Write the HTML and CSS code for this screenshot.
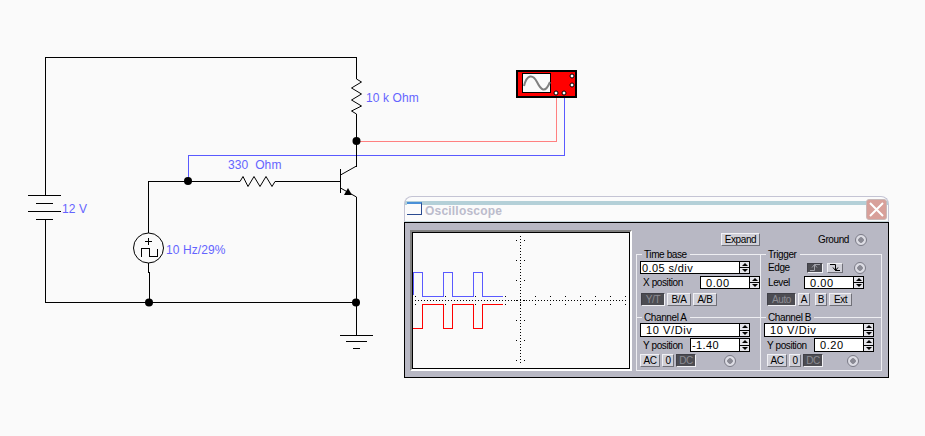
FILE: index.html
```html
<!doctype html>
<html>
  <head>
    <meta charset="utf-8">
    <title>Oscilloscope</title>
    <link rel="stylesheet" href="styles.css">
  </head>
  <body>
    <div class="desk">
      <svg class="circuit" width="925" height="436" viewBox="0 0 925 436">
        <!-- scope leads -->
        <path class="lead-a" d="M556.5 97V141.5H356.5"/>
        <path class="lead-b" d="M564.5 97V155.5H188.5V181.5"/>

        <!-- wires -->
        <path class="wire" d="M45.5 195V57.5H356.5V79"/>
        <path class="wire" d="M45.5 220V302.5H356.5"/>
        <path class="wire" d="M148.5 233V181.5H240"/>
        <path class="wire" d="M275 181.5H340.5"/>
        <path class="wire" d="M356.5 114V167"/>
        <path class="wire" d="M356.5 197V335"/>
        <path class="wire" d="M148.5 263V272H149.5V302"/>

        <!-- resistors -->
        <path class="part" d="M356.5 79L361.5 82L351.5 88L361.5 94L351.5 100L361.5 106L351.5 111L356.5 114"/>
        <path class="part" d="M240 181.5L243 176.5L248 186.5L254 176.5L260 186.5L266 176.5L272 186.5L275 181.5"/>

        <!-- battery -->
        <path class="wire" d="M28 195.5H61M36 203.5H53M28 211.5H61M36 219.5H53"/>

        <!-- square wave source -->
        <circle class="part" cx="148.5" cy="248" r="15"/>
        <path class="wire" d="M145 241.5H152M148.5 238V245M141 256.5V248.5H149.5V256.5H157V249"/>

        <!-- transistor -->
        <path class="wire" d="M340.5 169V193"/>
        <path class="part" d="M340.5 175L356.5 166M340.5 188L356.5 197"/>
        <path class="fill" d="M348 188L344 195L352 195Z"/>

        <!-- ground -->
        <path class="wire" d="M340 335.5H373M346 341.5H367M353 348.5H360"/>

        <!-- junctions -->
        <circle class="fill" cx="356.5" cy="141" r="4"/>
        <circle class="fill" cx="188" cy="181" r="4"/>
        <circle class="fill" cx="149" cy="302.5" r="4"/>
        <circle class="fill" cx="356" cy="302.5" r="4"/>

        <text class="label" x="366" y="102">10 k Ohm</text>
        <text class="label" x="228" y="169">330&#160; Ohm</text>
        <text class="label" x="62" y="213">12 V</text>
        <text class="label" x="166" y="254">10 Hz/29%</text>

        <!-- scope icon -->
        <rect class="scope-body" x="517" y="71" width="59" height="26"/>
        <rect class="scope-face" x="522.5" y="73.5" width="28" height="19"/>
        <path class="scope-sine" d="M524 86C527 74 533 74 537 82S545 94 550 82"/>
        <circle class="scope-pin" cx="556" cy="93" r="2"/>
        <circle class="scope-pin" cx="564" cy="93" r="2"/>
        <circle class="scope-pin" cx="572" cy="85" r="2"/>
        <circle class="scope-pin" cx="572" cy="76" r="2"/>
      </svg>

      <div class="window">
        <div class="titlebar">
          <span class="win-icon"></span>
          <span class="win-title">Oscilloscope</span>
          <span class="win-close">
            <svg width="21" height="21" viewBox="0 0 21 21"><path d="M4 4L17 17M17 4L4 17"/></svg>
          </span>
        </div>
        <div class="panel">
          <div class="screen">
            <svg width="216" height="135" viewBox="413 233 216 135">
              <path class="dots" d="M415 300.5H628M520.5 236V365"/>
              <path class="ticks-h" d="M415 296.5H627M415 304.5H627"/>
              <path class="ticks-v" d="M516.5 240V362M524.5 240V362"/>
              <path class="trace-b" d="M413.5 295V272.5H422.5V296.5H443.5V272.5H452.5V296.5H473.5V272.5H482.5V296.5H503"/>
              <path class="trace-a" d="M413 328.5H422.5V304.5H443.5V328.5H452.5V304.5H473.5V328.5H482.5V304.5H503"/>
            </svg>
          </div>
          <div class="controls">
            <div class="top-row">
              <span class="btn expand">Expand</span>
              <span class="ground">Ground</span>
              <span class="radio"></span>
            </div>
            <div class="groups">
              <div class="group timebase">
                <div class="legend"><span>Time base</span></div>
                <div class="box"><span class="val">0.05 s/div</span><span class="spin"><i></i><i></i></span></div>
                <div class="field">
                  <label>X position</label>
                  <div class="box small"><span class="val pad">0.00</span><span class="spin"><i></i><i></i></span></div>
                </div>
                <div class="btns indent">
                  <span class="btn on wide">Y/T</span>
                  <span class="btn wide">B/A</span>
                  <span class="btn wide">A/B</span>
                </div>
              </div>

              <div class="group trigger">
                <div class="legend"><span>Trigger</span></div>
                <div class="edge-row">
                  <label>Edge</label>
                  <span class="btn on edge">
                    <svg width="10" height="7" viewBox="0 0 10 7"><path d="M0 6.5H4.5V.5H10M2 3.5L4.5 .5L7 3.5"/></svg>
                  </span>
                  <span class="btn edge">
                    <svg width="10" height="7" viewBox="0 0 10 7"><path d="M0 .5H5.5V6.5H10M3 3.5L5.5 6.5L8 3.5"/></svg>
                  </span>
                  <span class="radio"></span>
                </div>
                <div class="field level">
                  <label>Level</label>
                  <div class="box small"><span class="val pad">0.00</span><span class="spin"><i></i><i></i></span></div>
                </div>
                <div class="btns auto-row">
                  <span class="btn on auto">Auto</span>
                  <span class="btn narrow">A</span>
                  <span class="btn narrow gap">B</span>
                  <span class="btn ext">Ext</span>
                </div>
              </div>

              <div class="group channel">
                <div class="legend"><span>Channel A</span></div>
                <div class="box"><span class="val pad">10 V/Div</span><span class="spin"><i></i><i></i></span></div>
                <div class="field">
                  <label>Y position</label>
                  <div class="box small"><span class="val">-1.40</span><span class="spin"><i></i><i></i></span></div>
                </div>
                <div class="btns">
                  <span class="btn coup">AC</span>
                  <span class="btn zero">0</span>
                  <span class="btn on coup">DC</span>
                  <span class="radio chan-a"></span>
                </div>
              </div>

              <div class="group channel">
                <div class="legend"><span>Channel B</span></div>
                <div class="box"><span class="val pad">10 V/Div</span><span class="spin"><i></i><i></i></span></div>
                <div class="field">
                  <label>Y position</label>
                  <div class="box small"><span class="val pad">0.20</span><span class="spin"><i></i><i></i></span></div>
                </div>
                <div class="btns indent-b">
                  <span class="btn coup">AC</span>
                  <span class="btn zero">0</span>
                  <span class="btn on coup">DC</span>
                  <span class="radio chan-b"></span>
                </div>
              </div>
            </div>
          </div>
        </div>
      </div>
    </div>
  </body>
</html>
```

FILE: styles.css
```css
* {
  box-sizing: border-box;
}
body {
  margin: 0;
  background: #fafafa;
  font-family: "Liberation Sans", Arial, sans-serif;
  font-size: 10px;
  letter-spacing: -.4px;
  color: #000;
}
.desk {
  position: relative;
  width: 925px;
  height: 436px;
  overflow: hidden;
}
.circuit {
  display: block;
}
.wire, .lead-a, .lead-b {
  fill: none;
  stroke: #000;
  stroke-width: 1;
  shape-rendering: crispEdges;
}
.lead-a {
  stroke: #ff8080;
}
.lead-b {
  stroke: #5a5aff;
}
.part {
  fill: none;
  stroke: #000;
  stroke-width: 1;
}
.fill {
  fill: #000;
}
.label {
  fill: #6464ff;
  font-size: 12px;
  letter-spacing: .1px;
}
.scope-body {
  fill: #f00;
  stroke: #000;
  stroke-width: 2;
}
.scope-face {
  fill: #fafafa;
  stroke: #000;
}
.scope-sine {
  fill: none;
  stroke: #808080;
  stroke-width: 2;
}
.scope-pin {
  fill: #fff;
  stroke: #000;
}

/* instrument window */
.window {
  position: absolute;
  left: 404px;
  top: 196px;
  width: 485px;
  height: 182px;
  display: flex;
  flex-direction: column;
}
.titlebar {
  height: 26px;
  display: flex;
  padding: 5px 2px 0 2px;
  border: 1px solid #c4c4d4;
  border-bottom-color: #c8d8dc;
  border-radius: 8px 8px 0 0;
  background: linear-gradient(#b4d0d8, #b4d0d8) 0 4px / 100% 4px no-repeat #fbfbfb;
}
.win-icon {
  width: 15px;
  height: 13px;
  border-top: 2px solid #4a90d8;
  border-right: 1px solid #2a4a90;
  border-bottom: 1px solid #2a4a90;
  background: #fbfbfb;
}
.win-title {
  margin: 2px 0 0 3px;
  font-size: 12px;
  font-weight: bold;
  letter-spacing: .2px;
  color: #bcbccc;
}
.win-close {
  margin: -3px -1px 0 auto;
  width: 21px;
  height: 21px;
  border: 1px solid #c8b8b8;
  border-radius: 3px;
  background: #d8a09a;
}
.win-close svg {
  display: block;
  margin: -1px;
}
.win-close path {
  stroke: #fff;
  stroke-width: 2;
}
.panel {
  height: 156px;
  display: flex;
  padding: 7px 0 0 5px;
  border: 1px solid #000;
  background: #b8b8c4;
}
.screen {
  width: 222px;
  height: 141px;
  flex: none;
  border: 2px solid;
  border-color: #808080 #fff #fff #808080;
}
.screen svg {
  display: block;
  box-sizing: content-box;
  border: 1px solid #000;
  background: #fafafa;
}
.dots, .ticks-h, .ticks-v {
  fill: none;
  stroke: #000;
  shape-rendering: crispEdges;
}
.dots {
  stroke-dasharray: 1 2;
}
.ticks-h {
  stroke-dasharray: 1 14;
}
.ticks-v {
  stroke-dasharray: 1 19;
}
.trace-a, .trace-b {
  fill: none;
  shape-rendering: crispEdges;
}
.trace-a {
  stroke: #f00;
}
.trace-b {
  stroke: #5a5aff;
}

.controls {
  margin-left: 4px;
  padding-top: 3px;
}
.top-row {
  height: 13px;
  margin-bottom: 8px;
  display: flex;
  align-items: center;
}
.expand {
  width: 39px;
  margin-left: 85px;
}
.ground {
  width: 28px;
  margin-left: 58px;
  margin-right: 9px;
  white-space: nowrap;
}
.groups {
  display: grid;
  grid-template-columns: 124px 121px;
  grid-template-rows: 63px 53px;
  border-right: 1px solid #eeeef2;
  border-bottom: 1px solid #eeeef2;
}
.group {
  padding: 0 0 0 3px;
  border-left: 1px solid #eeeef2;
}
.legend {
  height: 1px;
  margin-left: -3px;
  margin-bottom: 6px;
  display: flex;
  align-items: center;
}
.legend::before, .legend::after {
  content: "";
  height: 1px;
  background: #eeeef2;
}
.legend::before {
  width: 5px;
}
.legend::after {
  flex: 1;
  margin-left: 3px;
}
.legend span {
  padding-left: 2px;
  line-height: 13px;
  white-space: nowrap;
}
.box {
  width: 110px;
  height: 13px;
  display: flex;
  border: 1px solid #000;
  background: #fff;
  font-size: 11px;
  line-height: 12px;
}
.box.small {
  width: 60px;
  flex: none;
}
.val {
  flex: 1;
  padding-left: 1px;
  letter-spacing: .4px;
  white-space: nowrap;
}
.val.pad {
  padding-left: 5px;
  letter-spacing: .6px;
}
.spin {
  width: 10px;
  flex: none;
  display: flex;
  flex-direction: column;
  border-left: 1px solid #000;
  background: #000;
}
.spin i {
  flex: 1;
  display: flex;
  align-items: center;
  justify-content: center;
  background: #e4e4ea;
}
.spin i:first-child {
  margin-bottom: 1px;
}
.spin i::after {
  content: "";
  border: 3px solid transparent;
  border-top: 0;
  border-bottom: 3px solid #000;
}
.spin i:last-child::after {
  border-bottom: 0;
  border-top: 3px solid #000;
}
.field {
  margin-top: 2px;
  display: flex;
  align-items: center;
  height: 13px;
}
.field label {
  flex: 1;
  padding-left: 3px;
}
.btns {
  margin-top: 4px;
  height: 13px;
  display: flex;
  align-items: center;
  gap: 2px;
}
.btn {
  height: 13px;
  display: flex;
  align-items: center;
  justify-content: center;
  border: 1px solid;
  border-color: #f0f0f4 #707078 #707078 #f0f0f4;
  background: #d0d0d8;
  line-height: 11px;
}
.btn.on {
  border-color: #404048 #f0f0f4 #f0f0f4 #404048;
  background: #4c4c52;
  color: #8c8c94;
}
.indent {
  margin-left: 1px;
}
.wide {
  width: 24px;
}

/* trigger group */
.edge-row {
  height: 13px;
  display: flex;
  align-items: center;
  padding-left: 4px;
}
.edge-row label {
  width: 39px;
}
.edge {
  width: 16px;
  height: 10px;
  margin-right: 4px;
}
.edge path {
  fill: none;
  stroke: #000;
}
.edge.on path {
  stroke: #a0a0a8;
}
.edge-row .radio {
  margin-left: 7px;
}
.level {
  width: 100px;
  padding-left: 1px;
}
.auto-row {
  margin-left: 3px;
}
.auto {
  width: 29px;
}
.narrow {
  width: 12px;
}
.narrow.gap {
  margin: 0 0 0 3px;
}
.ext {
  width: 23px;
}

/* channel groups */
.channel .legend {
  margin-bottom: 5px;
}
.channel .box {
  height: 14px;
}
.channel .field {
  margin-top: 1px;
  height: 14px;
  width: 110px;
}
.channel .btns {
  margin-top: 2px;
  gap: 2px;
}
.coup {
  width: 20px;
}
.zero {
  width: 12px;
}
.indent-b {
  margin-left: 3px;
}
.radio {
  width: 12px;
  height: 12px;
  flex: none;
  border: 1px solid #7c7c88;
  border-radius: 50%;
  background: radial-gradient(circle, #8a8a94 0 2.5px, #dcdce4 3px);
}
.chan-a {
  margin-left: 26px;
}
.chan-b {
  margin-left: 22px;
}
```
